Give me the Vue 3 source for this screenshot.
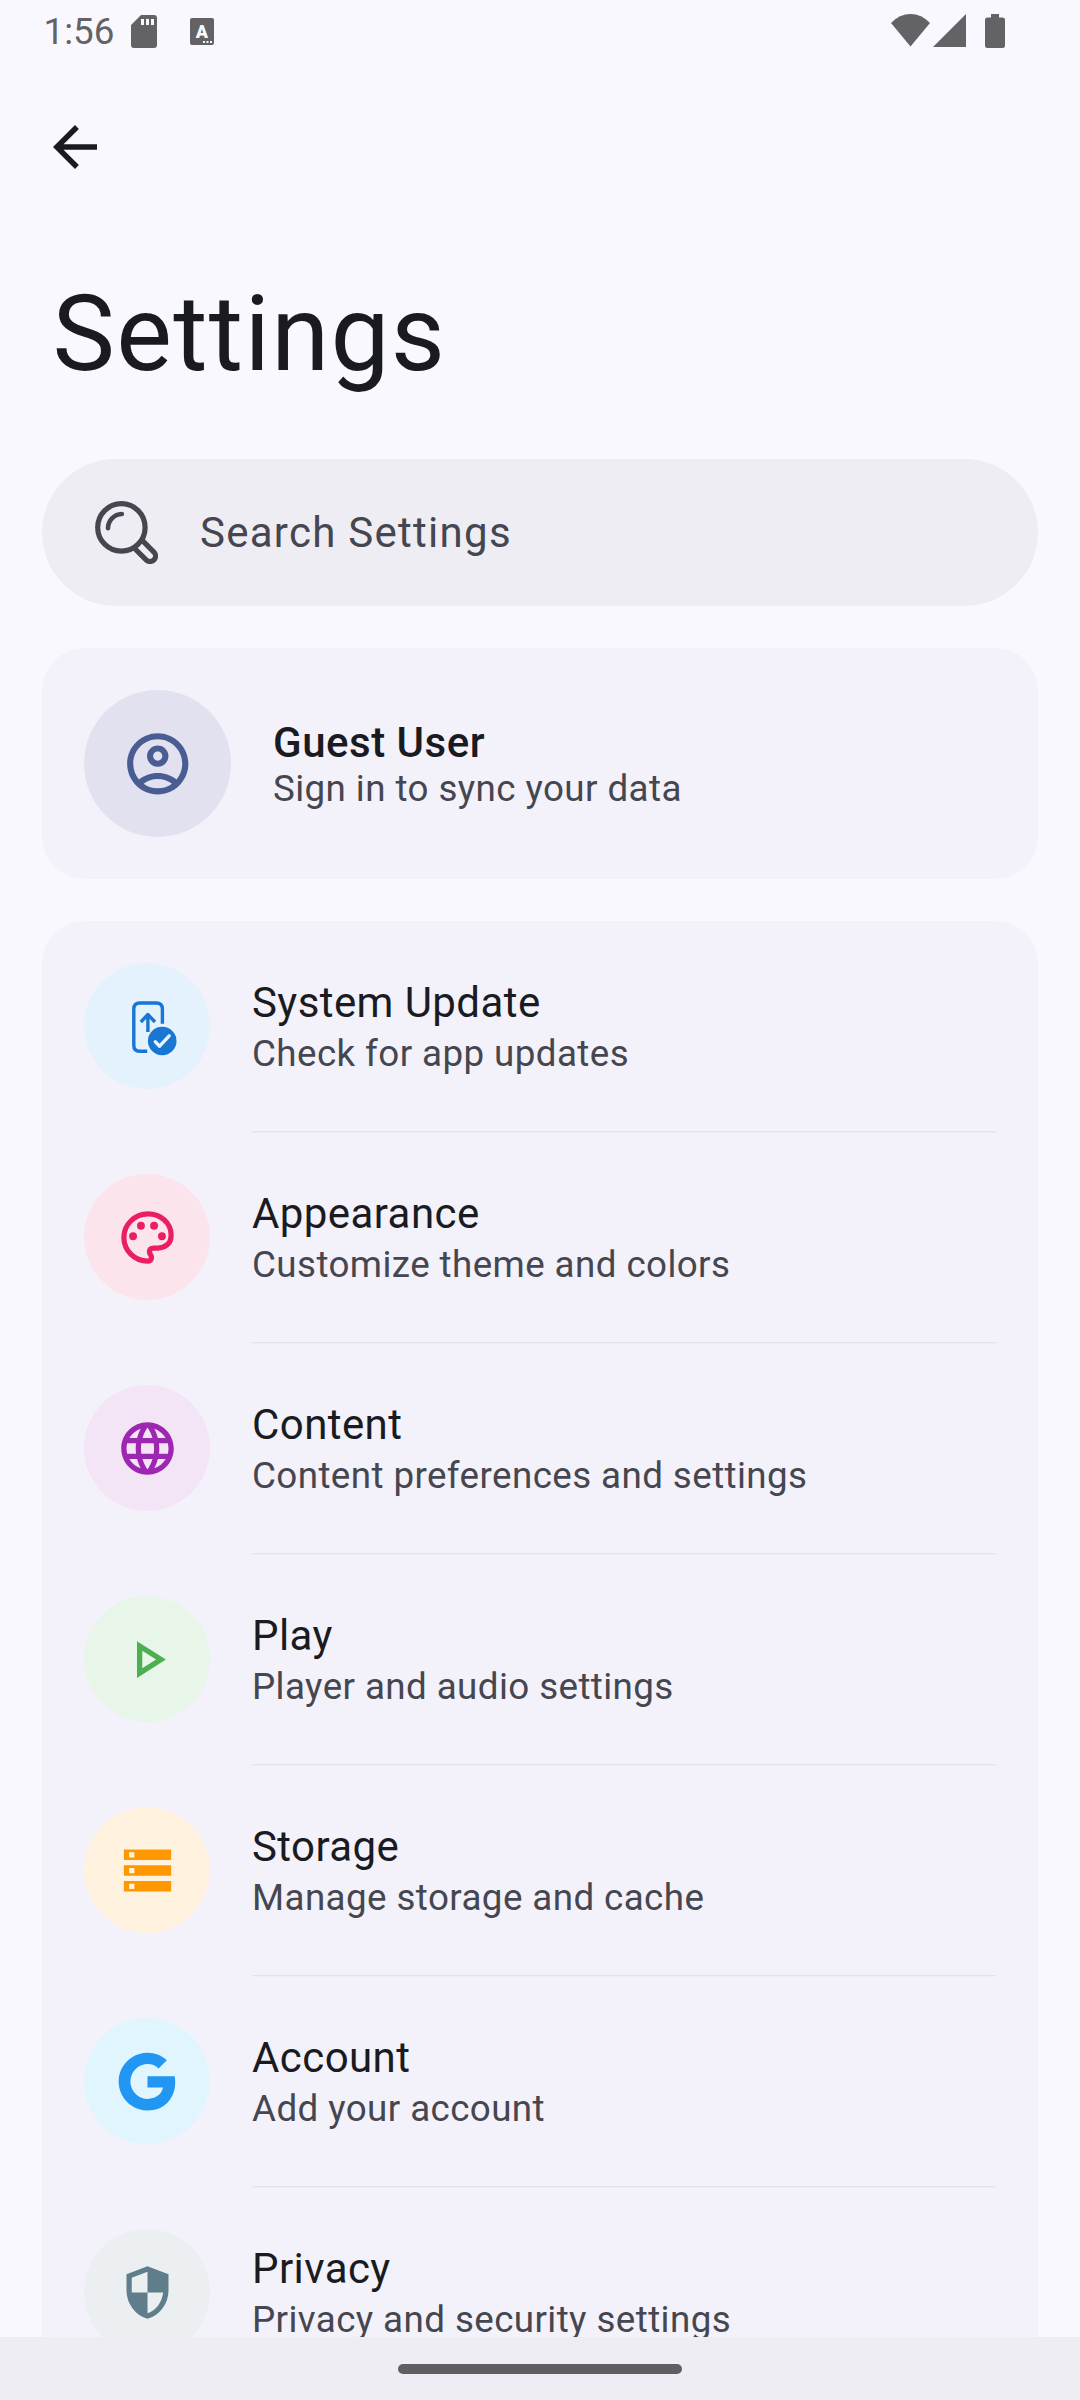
<script setup>
const items = [
  {
    title: 'System Update',
    subtitle: 'Check for app updates',
    color: '#1976d2',
    background: '#e3f2fd',
    update: true
  },
  {
    title: 'Appearance',
    subtitle: 'Customize theme and colors',
    color: '#e91e63',
    background: '#fce4ec',
    path: 'M12 22q-2.05 0-3.875-.788t-3.187-2.15t-2.15-3.187T2 12q0-2.075.813-3.9t2.2-3.175T8.25 2.788T12.2 2q2 0 3.775.688t3.113 1.9t2.125 2.875T22 11.05q0 2.875-1.75 4.413T16 17h-1.85q-.225 0-.312.125t-.088.275q0 .3.375.863t.375 1.287q0 1.25-.687 1.85T12 22zM12 20q.225 0 .363-.125t.137-.325q0-.35-.375-.825T11.75 17.3q0-1.05.725-1.675T14.25 15H16q1.65 0 2.825-.962T20 11.05q0-3.025-2.312-5.038T12.2 4Q8.8 4 6.4 6.325T4 12q0 3.325 2.338 5.663T12 20zM6.5 13a1.5 1.5 0 1 0 0-3 1.5 1.5 0 0 0 0 3zM9.5 9a1.5 1.5 0 1 0 0-3 1.5 1.5 0 0 0 0 3zM14.5 9a1.5 1.5 0 1 0 0-3 1.5 1.5 0 0 0 0 3zM17.5 13a1.5 1.5 0 1 0 0-3 1.5 1.5 0 0 0 0 3z'
  },
  {
    title: 'Content',
    subtitle: 'Content preferences and settings',
    color: '#9c27b0',
    background: '#f3e5f5',
    path: 'M11.99 2C6.47 2 2 6.48 2 12s4.47 10 9.99 10C17.52 22 22 17.52 22 12S17.52 2 11.99 2zm6.93 6h-2.95c-.32-1.25-.78-2.45-1.38-3.56 1.84.63 3.37 1.91 4.33 3.56zM12 4.04c.83 1.2 1.48 2.53 1.91 3.96h-3.82c.43-1.43 1.08-2.76 1.91-3.96zM4.26 14C4.1 13.36 4 12.69 4 12s.1-1.36.26-2h3.38c-.08.66-.14 1.32-.14 2s.06 1.34.14 2H4.26zm.82 2h2.95c.32 1.25.78 2.45 1.38 3.56-1.84-.63-3.37-1.9-4.33-3.56zm2.95-8H5.08c.96-1.66 2.49-2.93 4.33-3.56C8.81 5.55 8.35 6.75 8.03 8zM12 19.96c-.83-1.2-1.48-2.53-1.91-3.96h3.82c-.43 1.43-1.08 2.76-1.91 3.96zM14.34 14H9.66c-.09-.66-.16-1.32-.16-2s.07-1.35.16-2h4.68c.09.65.16 1.32.16 2s-.07 1.34-.16 2zm.25 5.56c.6-1.11 1.06-2.31 1.38-3.56h2.95c-.96 1.65-2.49 2.93-4.33 3.56zM16.36 14c.08-.66.14-1.32.14-2s-.06-1.34-.14-2h3.38c.16.64.26 1.31.26 2s-.1 1.36-.26 2h-3.38z'
  },
  {
    title: 'Play',
    subtitle: 'Player and audio settings',
    color: '#4caf50',
    background: '#e8f5e9',
    path: 'M10 8.64L15.27 12 10 15.36V8.64M8 5v14l11-7L8 5z'
  },
  {
    title: 'Storage',
    subtitle: 'Manage storage and cache',
    color: '#ff9800',
    background: '#fff3e0',
    path: 'M3 20h18v-4H3v4zm2-3h2v2H5v-2zM3 4v4h18V4H3zm4 3H5V5h2v2zm-4 7h18v-4H3v4zm2-3h2v2H5v-2z'
  },
  {
    title: 'Account',
    subtitle: 'Add your account',
    color: '#2196f3',
    background: '#e1f5fe',
    path: 'M22.56 12.25c0-.78-.07-1.53-.2-2.25H12v4.26h5.92c-.26 1.37-1.04 2.53-2.21 3.31-.98.66-2.23 1.06-3.71 1.06-2.86 0-5.29-1.93-6.16-4.53-.22-.67-.35-1.37-.35-2.1s.13-1.43.35-2.09c.87-2.6 3.3-4.53 6.16-4.53 1.62 0 3.06.56 4.21 1.64l3.15-3.15C17.45 2.09 14.97 1 12 1 7.7 1 3.99 3.47 2.18 7.07 1.43 8.55 1 10.22 1 12s.43 3.45 1.18 4.93C3.99 20.53 7.7 23 12 23c2.97 0 5.46-.98 7.28-2.66 2.08-1.92 3.28-4.74 3.28-8.09z'
  },
  {
    title: 'Privacy',
    subtitle: 'Privacy and security settings',
    color: '#607d8b',
    background: '#eceff1',
    path: 'M12 22q-3.475-.875-5.738-3.988T4 11.1V5l8-3l8 3v6.1q0 3.8-2.262 6.913T12 22zm0-2.1q2.425-.75 4.05-2.963T17.95 12H12V4.125l-6 2.25v5.175q0 .175.05.45H12z'
  }
]
</script>

<template>
  <div class="screen">
    <main class="content">
      <header class="status-bar">
        <div class="status-left">
          <span class="clock">1:56</span>
          <svg class="sd-icon" viewBox="0 0 26 33" width="26" height="33">
            <path fill-rule="evenodd" d="M10 0H23Q26 0 26 3V30Q26 33 23 33H3Q0 33 0 30V10zM10 4V10H13V4zM15 4V10H18V4zM20 4V10H23V4z" />
          </svg>
          <svg class="lang-icon" viewBox="0 0 24 27" width="24" height="27">
            <rect width="24" height="27" rx="2" />
            <text x="12" y="19.5" text-anchor="middle">A</text>
            <path class="dots" d="M13 23h2v2h-2zM16.5 23h2v2h-2zM20 23h2v2h-2z" />
          </svg>
        </div>
        <svg class="status-right" viewBox="0 0 114 34" width="114" height="34">
          <path d="M0 9Q8.500 0 19.500 0T39 9L19.500 32.500z" />
          <path d="M75 0V33H42z" />
          <path d="M100 0h8v3.500h3.500q2.500 0 2.500 2.500v25.500q0 2.500-2.500 2.500h-15q-2.500 0-2.500-2.500V6q0-2.500 2.500-2.500h3.500z" />
        </svg>
      </header>

      <nav class="toolbar">
        <svg viewBox="4 4 16 16" width="44" height="44">
          <path d="M20 11H7.830l5.590-5.590L12 4l-8 8 8 8 1.410-1.410L7.830 13H20v-2z" />
        </svg>
      </nav>

      <h1 class="page-title">Settings</h1>

      <div class="search">
        <svg viewBox="0 0 63 63" width="63" height="63">
          <circle cx="26.400" cy="26.400" r="23.700" />
          <path d="M47 39.200L58.900 51.100A5.500 5.500 0 0 1 51.100 58.900L39.200 47" />
          <path class="shine" d="M13 27.200A14.200 14.200 0 0 1 26.800 13" />
        </svg>
        <span>Search Settings</span>
      </div>

      <section class="card profile">
        <div class="avatar">
          <svg viewBox="0 0 24 24" width="73.500" height="73.500">
            <path d="M12 2C6.480 2 2 6.480 2 12s4.480 10 10 10 10-4.480 10-10S17.520 2 12 2zM7.350 18.500C8.660 17.560 10.260 17 12 17s3.340.56 4.650 1.500C15.340 19.440 13.740 20 12 20s-3.340-.56-4.650-1.500zm10.790-1.380C16.450 15.800 14.320 15 12 15s-4.450.8-6.140 2.120C4.700 15.730 4 13.950 4 12c0-4.420 3.580-8 8-8s8 3.580 8 8c0 1.950-.7 3.730-1.860 5.120zM12 6c-1.930 0-3.500 1.570-3.500 3.500S10.070 13 12 13s3.500-1.570 3.500-3.500S13.930 6 12 6zm0 5c-.83 0-1.500-.67-1.500-1.500S11.170 8 12 8s1.500.67 1.500 1.500S12.830 11 12 11z" />
          </svg>
        </div>
        <div class="labels">
          <span class="title strong">Guest User</span>
          <span class="subtitle">Sign in to sync your data</span>
        </div>
      </section>

      <section class="card list">
        <template v-for="(item, index) in items" :key="item.title">
          <hr v-if="index > 0" class="divider" />
          <div class="row">
            <div class="badge" :style="{ color: item.color, background: item.background }">
              <svg v-if="item.update" viewBox="0 0 63 63" width="63" height="63">
                <g class="outline">
                  <path d="M46.400 28.800V14Q46.400 8 40.400 8H23.800Q17.800 8 17.800 14V50.200Q17.800 56.200 23.800 56.200H31.200" />
                  <path d="M31.900 37V19.500M24.800 27L31.900 19.500L39 27" />
                </g>
                <circle cx="46.200" cy="46" r="14.300" />
                <path class="tick" d="M39.300 46.800L43.600 51.200L53.200 40.800" />
              </svg>
              <svg v-else viewBox="0 0 24 24" width="63" height="63">
                <path fill-rule="evenodd" :d="item.path" />
              </svg>
            </div>
            <div class="labels spaced">
              <span class="title">{{ item.title }}</span>
              <span class="subtitle">{{ item.subtitle }}</span>
            </div>
          </div>
        </template>
      </section>
    </main>
    <footer class="gesture-bar"><div class="handle"></div></footer>
  </div>
</template>

<style>
body {
  margin: 0;
  background: #faf8ff;
}
</style>

<style scoped>
.screen {
  display: flex;
  flex-direction: column;
  width: 1080px;
  height: 2400px;
  overflow: hidden;
  background: #faf8ff;
  color: #1a1b21;
  font-family: Roboto, sans-serif;
}
svg {
  display: block;
  flex: none;
  fill: currentColor;
}
.content {
  flex: 1;
  min-height: 0;
  box-sizing: border-box;
  padding: 0 42px;
  overflow: hidden;
}
.status-bar {
  display: flex;
  justify-content: space-between;
  height: 63px;
  color: #636365;
}
.status-left {
  display: flex;
  align-items: flex-start;
}
.clock {
  width: 87.5px;
  margin: 10px 0 0 1.5px;
  font-size: 36.75px;
  line-height: 43px;
}
.sd-icon {
  margin-top: 15px;
}
.lang-icon {
  margin: 18px 0 0 33px;
}
.lang-icon text {
  fill: #faf8ff;
  font-size: 18px;
  font-weight: 900;
}
.lang-icon .dots {
  fill: #faf8ff;
}
.status-right {
  margin: 14px 33px 0 0;
}
.toolbar {
  height: 168px;
  box-sizing: border-box;
  padding: 62px 11px 0;
}
.page-title {
  margin: 42px 0 63px;
  padding-left: 10.5px;
  font-size: 105px;
  font-weight: 400;
  line-height: 123px;
  letter-spacing: 1.31px;
}
.search {
  display: flex;
  align-items: center;
  gap: 42px;
  height: 147px;
  box-sizing: border-box;
  padding: 0 53px;
  border-radius: 73.5px;
  background: #eeedf3;
  color: #45464f;
  font-size: 42px;
  line-height: 49px;
  letter-spacing: 1.27px;
}
.search svg {
  fill: none;
  stroke: currentColor;
  stroke-width: 5.2;
}
.search .shine {
  stroke-width: 4.6;
  stroke-linecap: round;
}
.card {
  margin-top: 42px;
  border-radius: 42px;
  background: #f3f1fa;
}
.profile {
  display: flex;
  align-items: center;
  gap: 42px;
  padding: 42px;
}
.avatar,
.badge {
  display: flex;
  flex: none;
  align-items: center;
  justify-content: center;
  border-radius: 50%;
}
.avatar {
  width: 147px;
  height: 147px;
  background: #e2e1ef;
  color: #495d92;
}
.badge {
  width: 126px;
  height: 126px;
}
.labels {
  display: flex;
  flex-direction: column;
  white-space: nowrap;
}
.spaced {
  gap: 5px;
}
.title {
  font-size: 42px;
  line-height: 49px;
  letter-spacing: 0.42px;
}
.strong {
  font-weight: 500;
  letter-spacing: 0.52px;
}
.subtitle {
  color: #45464f;
  font-size: 36.75px;
  line-height: 43px;
  letter-spacing: 0.41px;
}
.row {
  display: flex;
  align-items: center;
  gap: 42px;
  height: 210px;
  box-sizing: border-box;
  padding: 0 42px;
}
.divider {
  height: 1px;
  margin: 0 42px 0 210px;
  border: 0;
  background: #e3e1ec;
  box-shadow: 0 1px 0 #eeecf5;
}
.outline,
.tick {
  fill: none;
  stroke: currentColor;
  stroke-width: 3.4;
  stroke-linecap: butt;
  stroke-linejoin: round;
}
.tick {
  stroke: #e3f2fd;
  stroke-linecap: round;
}
.gesture-bar {
  display: flex;
  flex: none;
  justify-content: center;
  height: 63px;
  box-sizing: border-box;
  padding-top: 27px;
  background: #eeedf3;
}
.handle {
  width: 284px;
  height: 10px;
  border-radius: 5px;
  background: #5f5f61;
}
</style>
